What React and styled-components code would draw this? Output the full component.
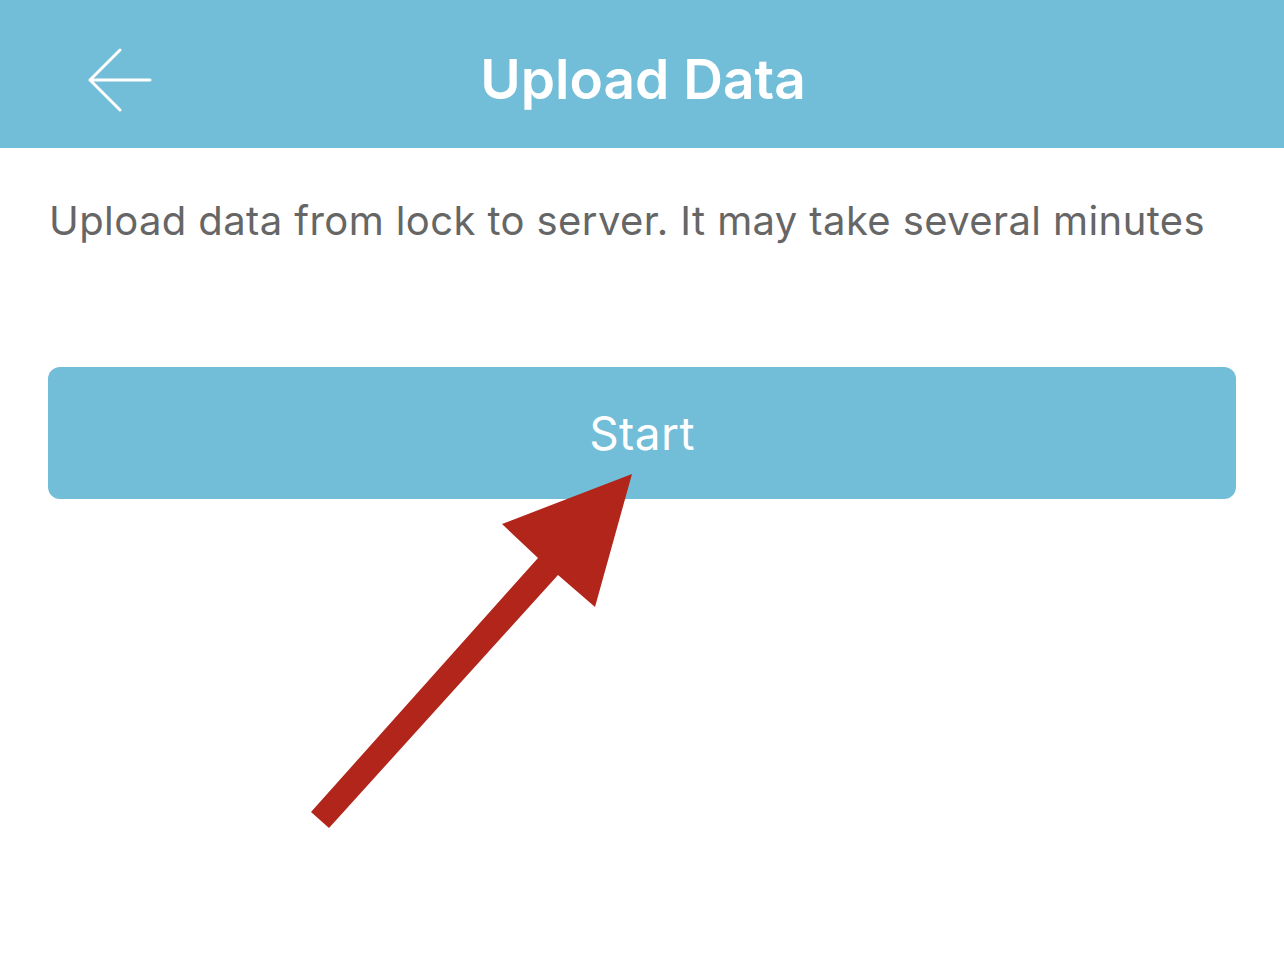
import React from "react";
import styled, { createGlobalStyle } from "styled-components";

const GlobalStyle = createGlobalStyle`
  html, body {
    margin: 0;
    padding: 0;
    background: #ffffff;
  }
  body {
    font-family: Inter, "Noto Sans", "Liberation Sans", sans-serif;
  }
`;

const App = () => {
  return (
    <Page>
      <GlobalStyle />
      <Header>
        <BackButton aria-label="back">
          <svg width="66" height="64" viewBox="0 0 66 64" fill="none">
            <path
              d="M34 2 L4 32 L34 62 M4 32 L64 32"
              stroke="#ffffff"
              strokeWidth="3"
              strokeLinecap="round"
              strokeLinejoin="round"
            />
          </svg>
        </BackButton>
        <Title>Upload Data</Title>
      </Header>
      <Content>
        <Description>
          Upload data from lock to server. It may take several minutes
        </Description>
        <StartButton>Start</StartButton>
      </Content>
      <Pointer width="1284" height="977" viewBox="0 0 1284 977">
        <polygon
          points="632,474 595,607 558,575 329,828 311,812 538,558 502,524"
          fill="#b2251b"
        />
      </Pointer>
    </Page>
  );
};

export default App;

const Page = styled.div`
  position: relative;
  width: 1284px;
  height: 977px;
  overflow: hidden;
  background: #fff;
`;

const Header = styled.div`
  position: relative;
  display: flex;
  align-items: center;
  justify-content: center;
  height: 148px;
  background: #72bdd8;
`;

const BackButton = styled.div`
  position: absolute;
  left: 86px;
  top: 48px;
  display: flex;
`;

const Title = styled.h1`
  margin: 0;
  color: #fff;
  font-size: 55px;
  font-weight: 600;
  padding: 10px 0 0 2px;
`;

const Content = styled.div`
  display: flex;
  flex-direction: column;
  padding: 0 48px;
`;

const Description = styled.p`
  margin: 0;
  padding-top: 47px;
  color: #666666;
  font-size: 40px;
  letter-spacing: 0.4px;
  line-height: 52px;
  padding-left: 1px;
`;

const StartButton = styled.button`
  margin-top: 120px;
  height: 132px;
  width: 100%;
  border: none;
  border-radius: 12px;
  background: #72bdd8;
  color: #fff;
  font-family: inherit;
  font-size: 46px;
  letter-spacing: 0.4px;
  font-weight: 400;
  padding: 0;
`;

const Pointer = styled.svg`
  position: absolute;
  left: 0;
  top: 0;
  pointer-events: none;
`;
